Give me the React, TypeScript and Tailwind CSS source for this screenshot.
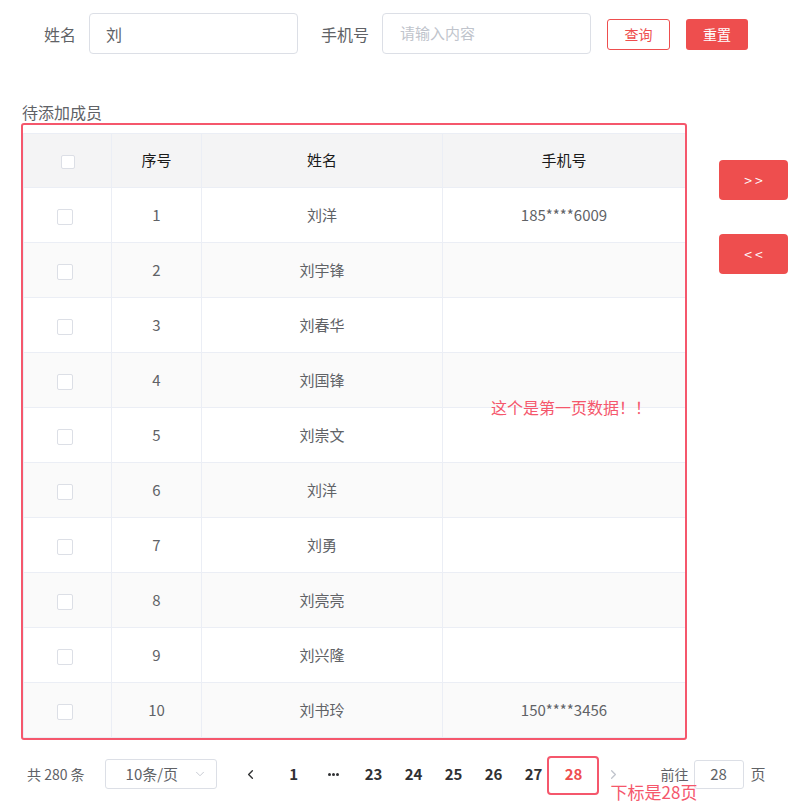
import React from 'react';
import { ChevronLeft, ChevronRight, ChevronDown } from 'lucide-react';

const rows = [
  { id: 1, name: '刘洋', phone: '185****6009' },
  { id: 2, name: '刘宇锋', phone: '' },
  { id: 3, name: '刘春华', phone: '' },
  { id: 4, name: '刘国锋', phone: '' },
  { id: 5, name: '刘崇文', phone: '' },
  { id: 6, name: '刘洋', phone: '' },
  { id: 7, name: '刘勇', phone: '' },
  { id: 8, name: '刘亮亮', phone: '' },
  { id: 9, name: '刘兴隆', phone: '' },
  { id: 10, name: '刘书玲', phone: '150****3456' },
];

const pages = ['23', '24', '25', '26', '27'];

const Checkbox: React.FC<{ size: string }> = ({ size }) => (
  <span className={`inline-block ${size} border border-[#dcdfe6] rounded-[2px] bg-white align-middle`} />
);

const App: React.FC = () => {
  return (
    <div className="w-[809px] h-[810px] bg-white relative font-['Noto_Sans_CJK_SC','Noto_Sans',sans-serif] text-[#606266]">
      {/* search bar */}
      <div className="flex items-center pt-[13px] pl-[44px] h-[54px]">
        <span className="text-[16px] text-[#606266]">姓名</span>
        <div className="ml-[13px] w-[209px] h-[41px] border border-[#dcdfe6] rounded-[4px] flex items-center pl-[16px] text-[16px] text-[#606266]">
          刘
        </div>
        <span className="ml-[23px] text-[16px] text-[#606266]">手机号</span>
        <div className="ml-[13px] w-[209px] h-[41px] border border-[#dcdfe6] rounded-[4px] flex items-center pl-[17px] text-[15px] text-[#c0c4cc]">
          请输入内容
        </div>
        <button className="ml-[16px] mt-[2px] w-[63px] h-[31px] border border-[#ee4e4e] rounded-[3px] text-[#ee4e4e] text-[14px] bg-white">
          查询
        </button>
        <button className="ml-[16px] mt-[2px] w-[62px] h-[31px] rounded-[3px] bg-[#ee4e4e] text-white text-[14px]">
          重置
        </button>
      </div>

      <div className="mt-[48px] pl-[22px] text-[16px] leading-[20px] text-[#606266]">待添加成员</div>

      <div className="flex mt-[11px] pl-[23px]">
        <div className="relative w-[662px]">
          <table className="w-[662px] border-collapse table-fixed text-[15px]">
            <colgroup>
              <col className="w-[88px]" />
              <col className="w-[90px]" />
              <col className="w-[241px]" />
              <col className="w-[243px]" />
            </colgroup>
            <thead>
              <tr className="h-[54px] bg-[#f4f4f5] text-[#1a1a1a]">
                <th className="border border-[#ebeef5] font-normal">
                  <Checkbox size="w-[14px] h-[14px]" />
                </th>
                <th className="border border-[#ebeef5] font-normal">序号</th>
                <th className="border border-[#ebeef5] font-normal">姓名</th>
                <th className="border border-[#ebeef5] font-normal">手机号</th>
              </tr>
            </thead>
            <tbody>
              {rows.map((r, i) => (
                <tr key={r.id} className={`h-[55px] ${i % 2 === 1 ? 'bg-[#fafafa]' : 'bg-white'}`}>
                  <td className="border border-[#ebeef5] text-center pr-[6px]">
                    <Checkbox size="w-[16px] h-[16px]" />
                  </td>
                  <td className="border border-[#ebeef5] text-center">{r.id}</td>
                  <td className="border border-[#ebeef5] text-center">{r.name}</td>
                  <td className="border border-[#ebeef5] text-center">{r.phone}</td>
                </tr>
              ))}
            </tbody>
          </table>
          {/* annotation outline */}
          <div className="absolute left-[-2px] top-[-10px] w-[666px] h-[617px] border-2 border-[#f5576c] rounded-[3px] pointer-events-none" />
          <div className="absolute left-[468px] top-[263px] text-[16px] leading-[22px] text-[#f5576c]">
            这个是第一页数据！！
          </div>
        </div>

        <div className="ml-[34px] pt-[27px] flex flex-col gap-[34px]">
          <button className="w-[69px] h-[40px] rounded-[4px] bg-[#ee4e4e] text-white text-[14px] tracking-[3px] pl-[3px]">
            &gt;&gt;
          </button>
          <button className="w-[69px] h-[40px] rounded-[4px] bg-[#ee4e4e] text-white text-[14px] tracking-[3px] pl-[3px]">
            &lt;&lt;
          </button>
        </div>
      </div>

      {/* pagination */}
      <div className="flex items-center mt-[21px] h-[30px] pl-[27px]">
        <span className="text-[14px] text-[#606266] whitespace-nowrap">共 280 条</span>
        <div className="ml-[20px] w-[112px] h-[30px] border border-[#dcdfe6] rounded-[3px] flex items-center pl-[20px] pr-[9px] text-[15px] text-[#606266]">
          <span className="flex-1">10条/页</span>
          <ChevronDown size={14} strokeWidth={1.5} className="text-[#c0c4cc]" />
        </div>
        <div className="ml-[14px] w-[40px] h-[30px] flex items-center justify-center text-[#303133]">
          <ChevronLeft size={15} strokeWidth={2.2} />
        </div>
        <div className="ml-[3px] flex items-center text-[15px] font-bold text-[#303133]">
          <div className="w-[40px] text-center">1</div>
          <div className="w-[40px] flex items-center justify-center gap-[1px]">
            <span className="w-[3px] h-[3px] rounded-full bg-[#303133]" />
            <span className="w-[3px] h-[3px] rounded-full bg-[#303133]" />
            <span className="w-[3px] h-[3px] rounded-full bg-[#303133]" />
          </div>
          {pages.map(p => (
            <div key={p} className="w-[40px] text-center">{p}</div>
          ))}
          <div className="relative w-[40px] text-center text-[#ee4e4e]">
            28
            <div className="absolute left-[-7px] top-[-7px] w-[52px] h-[39px] border-2 border-[#f5576c] rounded-[4px]" />
            <div className="absolute left-[57px] top-[18px] whitespace-nowrap text-[17px] leading-[22px] font-normal text-[#f5576c]">
              下标是28页
            </div>
          </div>
        </div>
        <div className="w-[40px] h-[30px] flex items-center justify-center text-[#c0c4cc]">
          <ChevronRight size={15} strokeWidth={2} />
        </div>
        <span className="ml-[27px] text-[14px] text-[#606266]">前往</span>
        <div className="ml-[5px] w-[50px] h-[29px] border border-[#dcdfe6] rounded-[3px] flex items-center justify-center text-[15px] text-[#606266]">
          28
        </div>
        <span className="ml-[7px] text-[15px] text-[#606266]">页</span>
      </div>
    </div>
  );
};

export default App;
